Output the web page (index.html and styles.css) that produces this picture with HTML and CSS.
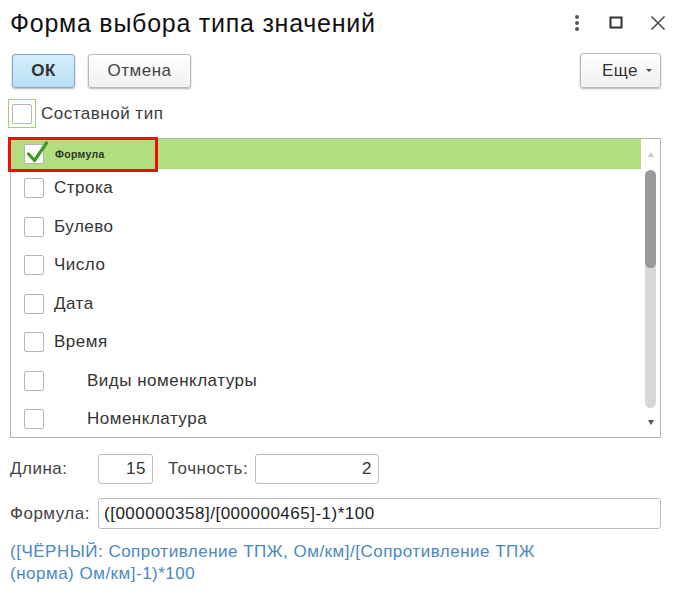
FILE: index.html
```html
<!DOCTYPE html>
<html lang="ru">
<head>
<meta charset="utf-8">
<title>Форма выбора типа значений</title>
<link rel="stylesheet" href="styles.css">
</head>
<body>
<div class="window">
  <div class="titlebar">
    <h1 class="title">Форма выбора типа значений</h1>
    <div class="win-controls">
      <svg class="wc wc-more" width="10" height="18" viewBox="0 0 10 18"><circle cx="5" cy="3" r="2" fill="#555"/><circle cx="5" cy="9" r="2" fill="#555"/><circle cx="5" cy="15" r="2" fill="#555"/></svg>
      <svg class="wc wc-max" width="14" height="14" viewBox="0 0 14 14"><rect x="1.5" y="1.5" width="11" height="10" fill="none" stroke="#333" stroke-width="2"/></svg>
      <svg class="wc wc-close" width="16" height="16" viewBox="0 0 16 16"><path d="M1.5 1.5 L14.5 14.5 M14.5 1.5 L1.5 14.5" stroke="#444" stroke-width="1.5" fill="none"/></svg>
    </div>
  </div>

  <div class="toolbar">
    <button class="btn btn-ok">ОК</button>
    <button class="btn btn-cancel">Отмена</button>
    <button class="btn btn-more">Еще <span class="caret"></span></button>
  </div>

  <label class="composite">
    <span class="focus-frame"><span class="cb"></span></span>
    <span class="composite-text">Составной тип</span>
  </label>

  <div class="list">
    <div class="rows">
      <div class="row row-selected">
        <span class="cb cb-checked">
          <svg class="check" width="22" height="22" viewBox="0 0 22 22"><path d="M2.5 13 L8.5 19.5 L20.5 2" fill="none" stroke="#3c9a1c" stroke-width="3.2" stroke-linecap="round" stroke-linejoin="round"/></svg>
        </span>
        <span class="row-text small">Формула</span>
        <span class="sel-frame"></span>
      </div>
      <div class="row"><span class="cb"></span><span class="row-text">Строка</span></div>
      <div class="row"><span class="cb"></span><span class="row-text">Булево</span></div>
      <div class="row"><span class="cb"></span><span class="row-text">Число</span></div>
      <div class="row"><span class="cb"></span><span class="row-text">Дата</span></div>
      <div class="row"><span class="cb"></span><span class="row-text">Время</span></div>
      <div class="row"><span class="cb"></span><span class="row-text indent">Виды номенклатуры</span></div>
      <div class="row"><span class="cb"></span><span class="row-text indent">Номенклатура</span></div>
    </div>
    <div class="scrollbar">
      <span class="arrow arrow-up"></span>
      <div class="track"><div class="thumb"></div></div>
      <span class="arrow arrow-down"></span>
    </div>
  </div>

  <div class="field-row">
    <span class="label label-len">Длина:</span>
    <span class="input input-len">15</span>
    <span class="label label-prec">Точность:</span>
    <span class="input input-prec">2</span>
  </div>

  <div class="field-row">
    <span class="label label-formula">Формула:</span>
    <span class="input input-formula">([000000358]/[000000465]-1)*100</span>
  </div>

  <p class="formula-desc">([ЧЁРНЫЙ: Сопротивление ТПЖ, Ом/км]/[Сопротивление ТПЖ<br>(норма) Ом/км]-1)*100</p>
</div>
</body>
</html>
```

FILE: styles.css
```css
* { box-sizing: border-box; }

html, body {
  margin: 0;
  padding: 0;
  background: #fff;
}

body {
  font-family: "Liberation Sans", Arial, sans-serif;
  font-size: 17px;
  letter-spacing: 0.5px;
  color: #333;
}

.window {
  width: 676px;
  height: 599px;
  position: relative;
}

.titlebar {
  display: flex;
  align-items: center;
  height: 46px;
  padding: 0 10px 0 10px;
}

.title {
  margin: 0;
  font-size: 25px;
  letter-spacing: 0.75px;
  font-weight: normal;
  color: #111;
  flex: 1;
  line-height: 1;
}

.win-controls {
  display: flex;
  align-items: center;
}

.wc-more { margin-right: 27px; }
.wc-max { margin-right: 27px; }
.wc-close { margin-right: 0; }

.toolbar {
  display: flex;
  align-items: center;
  padding: 0 15px 0 12px;
  margin-top: 7px;
}

.btn {
  font-family: "Liberation Sans", Arial, sans-serif;
  font-size: 17px;
  letter-spacing: 0.5px;
  height: 34px;
  border-radius: 3px;
  border: 1px solid #b9b9b9;
  background: linear-gradient(#ffffff, #f0f0f0);
  box-shadow: 0 1px 2px rgba(0,0,0,0.3);
  color: #444;
  padding: 0;
}

.btn-ok {
  width: 63px;
  font-weight: bold;
  color: #333;
  border-color: #86a9c4;
  background: linear-gradient(#d3eefc, #b8dff5);
}

.btn-cancel {
  width: 103px;
  margin-left: 13px;
}

.btn-more {
  width: 81px;
  height: 35px;
  margin-left: auto;
  display: flex;
  align-items: center;
  justify-content: flex-end;
  padding-right: 8px;
  gap: 8px;
  color: #333;
}

.caret {
  width: 0;
  height: 0;
  border-left: 3px solid transparent;
  border-right: 3px solid transparent;
  border-top: 3px solid #444;
}

.composite {
  display: flex;
  align-items: center;
  margin: 11px 0 0 8px;
  height: 29px;
}

.focus-frame {
  width: 28px;
  height: 29px;
  border: 1px solid #9fd16c;
  display: flex;
  align-items: center;
  justify-content: center;
}

.composite-text {
  margin-left: 5px;
  color: #3a3a3a;
}

.cb {
  width: 20px;
  height: 20px;
  border: 1px solid #b4b4b4;
  border-radius: 2px;
  background: #fff;
  flex: none;
  position: relative;
}

.list {
  display: flex;
  margin: 10px 15px 0 10px;
  height: 300px;
  border: 1px solid #b3b3b3;
}

.rows {
  flex: 1;
}

.row {
  display: flex;
  align-items: center;
  height: 38.5px;
  padding-left: 13px;
  position: relative;
}

.row-selected {
  height: 30px;
  background: #b3de80;
}

.row-text {
  margin-left: 10px;
  color: #333;
}

.row-text.indent {
  margin-left: 43px;
}

.row-text.small {
  font-size: 10.5px;
  letter-spacing: 0.3px;
  font-weight: bold;
  color: #2a3a20;
  margin-left: 11px;
}

.check {
  position: absolute;
  left: 1px;
  top: -4px;
}

.sel-frame {
  position: absolute;
  left: -3px;
  top: -2px;
  width: 150px;
  height: 35px;
  border: 3px solid #f20d0d;
}

.scrollbar {
  width: 19px;
  display: flex;
  flex-direction: column;
  align-items: center;
}

.arrow {
  width: 0;
  height: 0;
  border-left: 3.5px solid transparent;
  border-right: 3.5px solid transparent;
  flex: none;
}

.arrow-up {
  border-bottom: 5px solid #c8c8c8;
  margin-top: 13px;
  margin-bottom: 13px;
}

.arrow-down {
  border-top: 5px solid #555;
  margin-top: 12px;
}

.track {
  width: 11px;
  height: 238px;
  background: #d7d7d7;
  border-radius: 6px;
  display: flex;
  flex-direction: column;
}

.thumb {
  height: 98px;
  background: #9a9a9a;
  border-radius: 6px;
}

.field-row {
  display: flex;
  align-items: center;
  padding: 0 15px 0 10px;
}

.list + .field-row {
  margin-top: 16px;
}

.field-row + .field-row {
  margin-top: 14px;
}

.label {
  color: #444;
}

.label-len { width: 88px; }
.label-prec { margin-left: 15px; width: 87px; }
.label-formula { width: 88px; }

.input {
  height: 30px;
  border: 1px solid #bdbdbd;
  border-radius: 3px;
  display: flex;
  align-items: center;
  color: #333;
  background: #fff;
}

.input-len {
  width: 55px;
  justify-content: flex-end;
  padding-right: 6px;
}

.input-prec {
  width: 124px;
  justify-content: flex-end;
  padding-right: 6px;
}

.input-formula {
  flex: 1;
  height: 31px;
  padding-left: 5px;
  color: #222;
}

.formula-desc {
  margin: 12px 0 0 10px;
  line-height: 22px;
  color: #4a88c2;
}
```
